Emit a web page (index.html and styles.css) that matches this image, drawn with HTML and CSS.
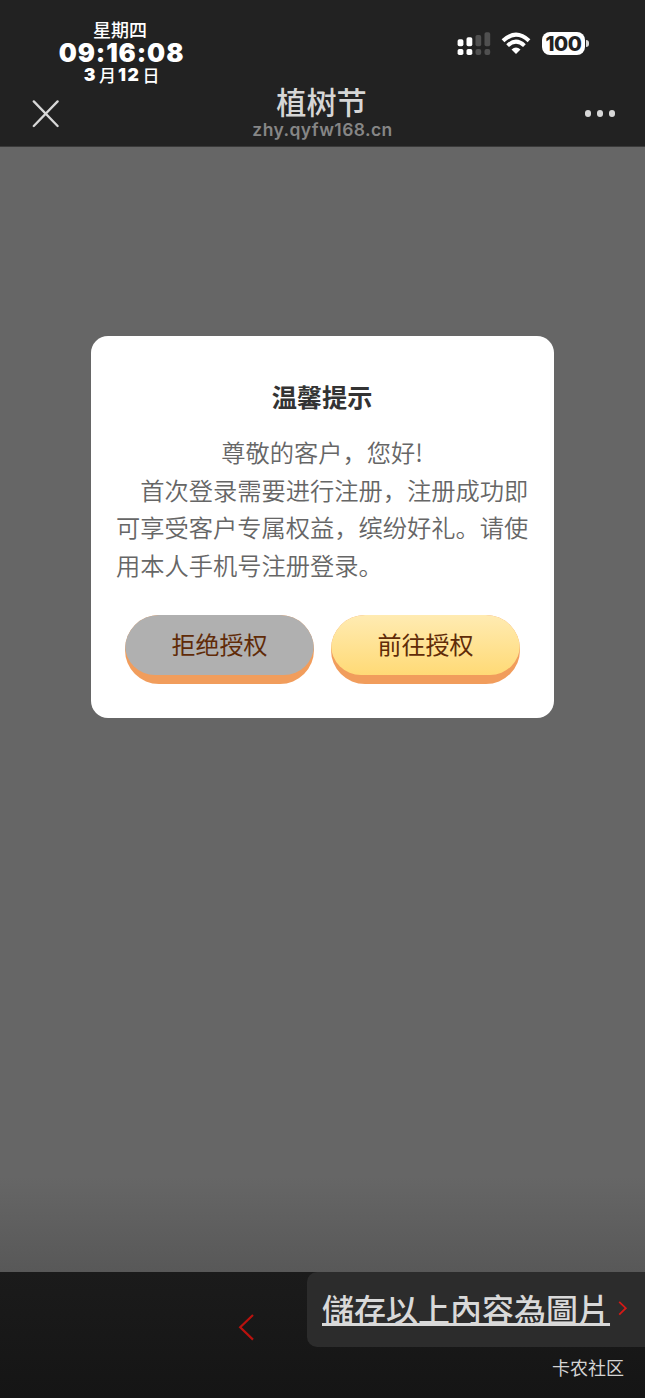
FILE: index.html
```html
<!DOCTYPE html>
<html lang="zh-CN">
<head>
<meta charset="utf-8">
<meta name="viewport" content="width=device-width">
<title>植树节</title>
<link rel="stylesheet" href="styles.css">
</head>
<body>
<div class="screen">
  <header class="header">
    <div class="clock">
      <div class="clock-week">星期四</div>
      <div class="clock-time">09:16:08</div>
      <div class="clock-date"><b>3</b>月<b class="day">12</b>日</div>
      <svg class="close" width="28" height="28" viewBox="0 0 28 28"><path d="M1.8 1.4 25.6 26M25.6 1.4 1.8 26" stroke="#d8d8d8" stroke-width="2.3" stroke-linecap="round"/></svg>
    </div>
    <div class="heading">
      <h1 class="site-title">植树节</h1>
      <div class="site-url">zhy.qyfw168.cn</div>
    </div>
    <div class="status-side">
      <div class="status">
        <svg class="signal" width="34" height="24" viewBox="0 0 34 24">
          <g fill="#fff"><rect x=".6" y="7.2" width="5.8" height="7" rx="1.8"/><rect x="9.5" y="5.2" width="5.8" height="9" rx="1.8"/><rect x=".6" y="17" width="5.8" height="6" rx="1.8"/><rect x="9.5" y="17" width="5.8" height="6" rx="1.8"/></g>
          <g fill="#505050"><rect x="18.5" y="3" width="5.7" height="11.2" rx="1.8"/><rect x="18.5" y="17" width="5.7" height="6" rx="2"/><rect x="27.5" y=".2" width="5.7" height="14" rx="1.8"/><rect x="27.5" y="17" width="5.7" height="6" rx="2"/></g>
        </svg>
        <svg class="wifi" width="30" height="23" viewBox="0 0 30 23" fill="none" stroke="#fff" stroke-width="4">
          <path d="M2 8.8Q15-3.4 28 8.8"/><path d="M6.6 13.6Q15 5.8 23.4 13.6"/><path d="M10.5 17.6Q15 13.6 19.5 17.6L15 22Z" fill="#fff" stroke="none"/>
        </svg>
        <div class="battery"><span class="battery-level">100</span></div>
        <div class="battery-cap"></div>
      </div>
      <div class="more"><i class="dot"></i><i class="dot"></i><i class="dot"></i></div>
    </div>
  </header>

  <main class="page">
    <section class="dialog">
      <h2 class="dialog-title">温馨提示</h2>
      <p class="greeting">尊敬的客户，您好!</p>
      <p class="message">首次登录需要进行注册，注册成功即<br>可享受客户专属权益，缤纷好礼。请使<br>用本人手机号注册登录。</p>
      <div class="actions">
        <button class="button refuse"><span class="face">拒绝授权</span></button>
        <button class="button accept"><span class="face">前往授权</span></button>
      </div>
    </section>
  </main>

  <footer class="footer">
    <div class="nav">
      <svg class="back" width="17" height="28" viewBox="0 0 17 28"><path d="M15 2 2.2 14.2 15 26.6" fill="none" stroke="#b9120e" stroke-width="2.2"/></svg>
    </div>
    <div class="tools">
      <div class="save">
        <span class="save-text" lang="zh-TW">儲存以上內容為圖片</span>
        <svg class="next" width="10" height="16" viewBox="0 0 10 16"><path d="M1.2 1.8 7.8 8.2 1.2 14.6" fill="none" stroke="#d51a17" stroke-width="1.8"/></svg>
      </div>
      <div class="community">卡农社区</div>
    </div>
  </footer>
</div>
</body>
</html>
```
FILE: styles.css
```css
* { box-sizing: border-box; }
body { margin: 0; font-family: "Noto Sans CJK SC", sans-serif; }
h1, h2, p { margin: 0; }
svg { display: block; flex: none; }
.screen { width: 645px; height: 1398px; display: flex; flex-direction: column; overflow: hidden; }

.header { height: 147px; background: #222; display: grid; grid-template-columns: 215px 215px 215px; border-bottom: 1px solid #3a3a3a; }
.clock { padding: 18px 0 0 28px; color: #fff; text-align: center; display: flex; flex-direction: column; white-space: nowrap; }
.clock-week { font-size: 18px; font-weight: 500; line-height: 22px; padding-right: 3px; }
.clock-time { font-family: Inter, sans-serif; font-weight: 900; font-size: 25.5px; line-height: 25px; letter-spacing: .9px; }
.clock-date { font-size: 17px; font-weight: 500; line-height: 19px; display: flex; justify-content: center; gap: 2px; }
.clock-date b { font-family: Inter, sans-serif; font-weight: 900; font-size: 17.5px; line-height: 20px; letter-spacing: 1.6px; }
.close { margin: 15px 0 0 4px; }

.heading { padding-top: 84px; text-align: center; }
.site-title { font-size: 30.2px; line-height: 35px; font-weight: 500; color: #d6d6d6; padding-right: 2px; }
.site-url { font-family: Inter, sans-serif; font-size: 17.5px; line-height: 22px; font-weight: 600; color: #868686; letter-spacing: .4px; }

.status-side { padding: 32px 0 0 27px; }
.status { display: flex; height: 24px; }
.wifi { margin-left: 10px; }
.battery { margin-left: 11px; width: 43px; height: 23px; border-radius: 8px; background: #fff; display: flex; align-items: center; justify-content: center; }
.battery-level { font-family: Inter, sans-serif; font-weight: 800; font-size: 20.5px; line-height: 23px; letter-spacing: -.4px; color: #222; }
.battery-cap { width: 2.5px; height: 7px; margin: 8px 0 0 1px; border-radius: 0 3px 3px 0; background: #d8d8d8; }
.more { display: flex; gap: 5.5px; padding: 54px 0 0 127.5px; }
.dot { width: 6.5px; height: 6.5px; border-radius: 50%; background: #d8d8d8; }

.page { height: 1125px; padding: 189px 91px 0; background: linear-gradient(#666 0 1030px, #585858 1125px); }
.dialog { height: 382px; border-radius: 17px; background: #fff; padding: 42px 25px 0; }
.dialog-title { text-align: center; font-size: 25.2px; line-height: 37px; color: #333; font-weight: 700; padding-right: 1px; }
.greeting, .message { font-size: 24.25px; line-height: 37.5px; color: #666; white-space: nowrap; font-weight: 350; }
.greeting { margin-top: 18px; text-align: center; padding-right: 1px; }
.message { text-indent: 24.25px; }
.actions { display: flex; gap: 17px; margin: 32px 0 0 9px; }
.button { display: block; width: 189px; height: 69px; padding: 0 0 9px; border: 0; border-radius: 34px; background: #f19d5c; overflow: hidden; }
.face { display: block; height: 60px; border-radius: 30px; line-height: 57px; font-family: "Noto Sans CJK SC", sans-serif; font-size: 24px; color: #602b08; }
.refuse .face { background: #b0b0b0; }
.accept .face { background: linear-gradient(#ffebb2, #ffda76); }

.footer { height: 126px; background: linear-gradient(#1b1b1b, #151515); display: grid; grid-template-columns: 307px 338px; }
.nav { padding: 41px 0 0 238px; }
.save { height: 75px; background: #2c2c2c; border-radius: 10px 0 0 10px; display: flex; align-items: center; padding: 0 0 3px 15px; }
.save-text { font-family: "Noto Sans CJK TC", sans-serif; font-size: 32px; line-height: 44px; font-weight: 500; color: #d9d9d9; text-decoration: underline; text-decoration-thickness: 3px; text-underline-offset: 1px; text-decoration-skip-ink: none; white-space: nowrap; }
.next { margin-left: 8px; }
.community { padding: 7px 21px 0 0; text-align: right; font-size: 18px; line-height: 26px; color: #d4d4d4; }
```
